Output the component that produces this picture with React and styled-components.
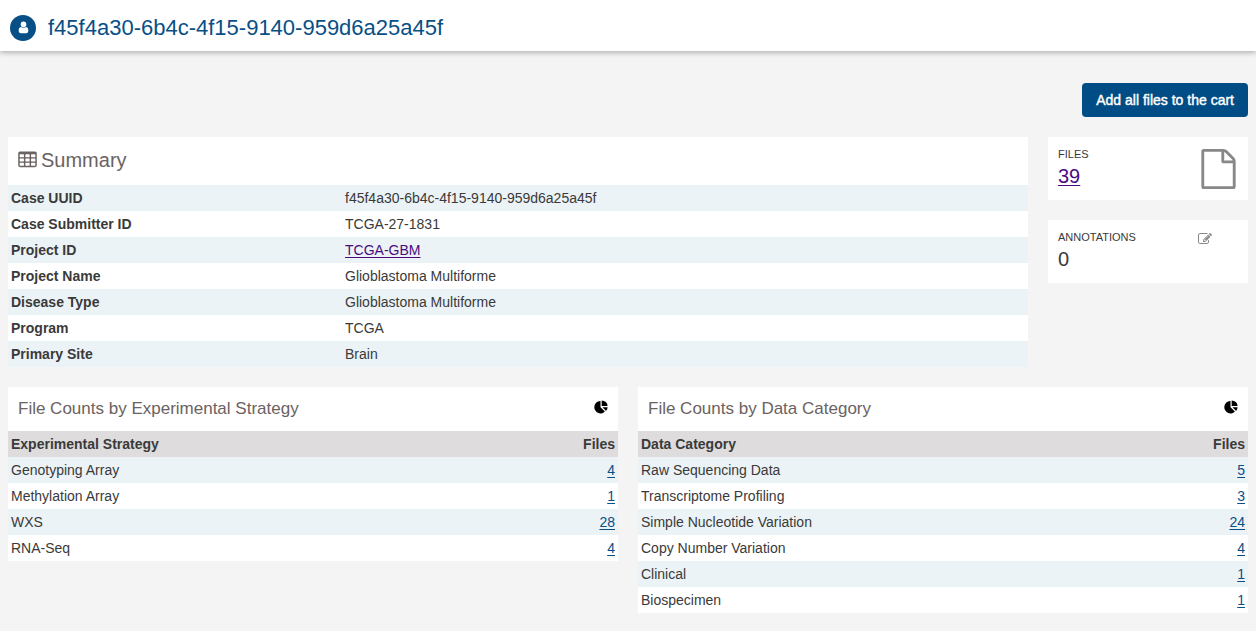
import React from 'react';
import styled, { createGlobalStyle } from 'styled-components';

const GlobalStyle = createGlobalStyle`
  *, *::before, *::after { box-sizing: border-box; }
  body {
    margin: 0;
    background: #f4f4f4;
    color: #3a3a3a;
    font-family: "Liberation Sans", Arial, sans-serif;
    font-size: 14px;
    line-height: 20px;
  }
`;

const Header = styled.header`
  display: flex;
  align-items: center;
  gap: 12px;
  padding: 14px 10px 10px;
  background: #fff;
  box-shadow: 0 2px 5px 0 rgba(0, 0, 0, 0.26);
`;

const Avatar = styled.span`
  display: flex;
  align-items: center;
  justify-content: center;
  flex: none;
  width: 26px;
  height: 26px;
  border-radius: 50%;
  background: #084f86;
`;

const Title = styled.h1`
  margin: 0;
  font-size: 22px;
  line-height: 27px;
  font-weight: 400;
  color: #084f86;
`;

const Main = styled.main`
  display: flex;
  flex-direction: column;
  gap: 20px;
  padding: 32px 8px 18px;
`;

const Actions = styled.div`
  display: flex;
  justify-content: flex-end;
`;

const Button = styled.button`
  height: 34px;
  padding: 0 14px;
  border: 0;
  border-radius: 4px;
  background: #004d85;
  color: #fff;
  font: inherit;
  -webkit-text-stroke: 0.4px #fff;
  cursor: pointer;
`;

const Columns = styled.div`
  display: flex;
  align-items: flex-start;
  gap: 20px;
`;

const Card = styled.section`
  flex: 1;
  min-width: 0;
  background: #fff;
`;

const CardHeader = styled.div`
  display: flex;
  align-items: center;
  justify-content: space-between;
  padding: ${(p) => (p.$large ? '11px 10px 13px' : '10px')};
`;

const CardTitle = styled.h2`
  display: flex;
  align-items: center;
  gap: 4px;
  margin: 0;
  font-size: ${(p) => (p.$large ? 20 : 17)}px;
  line-height: 24px;
  font-weight: 400;
  color: #6b6262;
`;

const ChartButton = styled.button`
  display: flex;
  align-self: flex-start;
  margin: 3px 0 0;
  padding: 0;
  border: 0;
  background: none;
  color: #000;
  cursor: pointer;
`;

const Table = styled.table`
  width: 100%;
  border-collapse: collapse;
  table-layout: fixed;
`;

const Row = styled.tr`
  background: #fff;
  tbody > &:nth-child(odd) { background: #ebf3f6; }
  thead > & { background: #dedcdd; }
`;

const Heading = styled.th`
  width: ${(p) => p.$width || 'auto'};
  padding: 3px;
  text-align: ${(p) => (p.$end ? 'right' : 'left')};
`;

const Cell = styled.td`
  padding: 3px;
  text-align: ${(p) => (p.$end ? 'right' : 'left')};
`;

const Link = styled.a`
  color: ${(p) => (p.$seen ? '#4b0b7f' : '#084f86')};
  text-decoration: underline;
  text-underline-offset: 2px;
  text-decoration-thickness: 1px;
`;

const Aside = styled.aside`
  display: flex;
  flex-direction: column;
  flex: none;
  gap: 20px;
  width: 200px;
`;

const CountCard = styled.section`
  display: flex;
  align-items: flex-start;
  justify-content: space-between;
  padding: 8px 12px 11px 10px;
  background: #fff;
`;

const CountLabel = styled.div`
  font-size: 11px;
  line-height: 18px;
  text-transform: uppercase;
`;

const CountValue = styled.div`
  font-size: 20px;
  line-height: 26px;
`;

const IconSlot = styled.div`
  display: flex;
  width: ${(p) => (p.$wide ? 38 : 35)}px;
  padding-top: 4px;
  color: #888;
`;

const PersonIcon = () => (
  <svg width="11" height="13" viewBox="0 0 10 12" fill="#fff" aria-hidden="true">
    <path d="M5 .5a2.600 2.700 0 0 1 2.600 2.800c0 1-.3 1.700-.8 2.300.8.1 1.500.3 1.900.7.5.5.7 1.500.7 2.800 0 1.500-.7 2.100-1.900 2.100H2.500C1.300 11.200.6 10.600.6 9.100c0-1.300.2-2.300.7-2.800.4-.4 1.100-.6 1.900-.7A3.300 3.300 0 0 1 2.400 3.300 2.600 2.700 0 0 1 5 .5z" />
    <path d="M3 5.500q2 1.400 4 0" fill="none" stroke="#084f86" strokeWidth=".6" />
  </svg>
);

const TableIcon = () => (
  <svg width="19" height="20" viewBox="0 0 1664 1792" fill="currentColor" aria-hidden="true">
    <path
      fillRule="evenodd"
      d="M160 128h1344a160 160 0 0 1 160 160v1088a160 160 0 0 1-160 160H160A160 160 0 0 1 0 1376V288A160 160 0 0 1 160 128z
      M160 384h320q32 0 32 32v192q0 32-32 32H160q-32 0-32-32V416q0-32 32-32z
      M672 384h320q32 0 32 32v192q0 32-32 32H672q-32 0-32-32V416q0-32 32-32z
      M1184 384h320q32 0 32 32v192q0 32-32 32h-320q-32 0-32-32V416q0-32 32-32z
      M160 768h320q32 0 32 32v192q0 32-32 32H160q-32 0-32-32V800q0-32 32-32z
      M672 768h320q32 0 32 32v192q0 32-32 32H672q-32 0-32-32V800q0-32 32-32z
      M1184 768h320q32 0 32 32v192q0 32-32 32h-320q-32 0-32-32V800q0-32 32-32z
      M160 1152h320q32 0 32 32v192q0 32-32 32H160q-32 0-32-32v-192q0-32 32-32z
      M672 1152h320q32 0 32 32v192q0 32-32 32H672q-32 0-32-32v-192q0-32 32-32z
      M1184 1152h320q32 0 32 32v192q0 32-32 32h-320q-32 0-32-32v-192q0-32 32-32z"
    />
  </svg>
);

const FileIcon = () => (
  <svg width="35" height="40" viewBox="0 0 1536 1792" fill="currentColor" aria-hidden="true">
    <path d="M1468 380q28 28 48 76t20 88v1152q0 40-28 68t-68 28H96q-40 0-68-28t-28-68V96q0-40 28-68T96 0h896q40 0 88 20t76 48zM1024 136v376h376q-10-29-22-41l-313-313q-12-12-41-22zm384 1528V640H992q-40 0-68-28t-28-68V128H128v1536h1280z" />
  </svg>
);

const EditIcon = () => (
  <svg width="14" height="14" viewBox="0 0 1792 1792" fill="currentColor" aria-hidden="true">
    <path d="M888 1184l116-116-152-152-116 116v56h96v96h56zm440-720q-16-16-33 1l-350 350q-17 17-1 33t33-1l350-350q17-17 1-33zm80 594v190q0 119-84.5 203.5t-203.5 84.5h-832q-119 0-203.500-84.500t-84.500-203.500v-832q0-119 84.500-203.500t203.500-84.500h832q63 0 117 25 15 7 18 23 3 17-9 29l-49 49q-14 14-32 8-23-6-45-6h-832q-66 0-113 47t-47 113v832q0 66 47 113t113 47h832q66 0 113-47t47-113v-126q0-13 9-22l64-64q15-15 35-7t20 29zm-96-738l288 288-672 672h-288v-288zm444 132l-92 92-288-288 92-92q28-28 68-28t68 28l152 152q28 28 28 68t-28 68z" />
  </svg>
);

const PieIcon = () => (
  <svg width="14" height="14" viewBox="0 0 14 14" fill="currentColor" aria-hidden="true">
    <path d="M6.500 1v6.300l4.400 4.300A6.200 6.200 0 1 1 6.500 1z" />
    <path d="M7.700.4a5.900 5.900 0 0 1 5.900 5.700H7.700z" />
    <path d="M8.500 7.300h5.100a5.600 5.600 0 0 1-1.500 3.600z" />
  </svg>
);

const summary = [
  ['Case UUID', 'f45f4a30-6b4c-4f15-9140-959d6a25a45f'],
  ['Case Submitter ID', 'TCGA-27-1831'],
  ['Project ID', 'TCGA-GBM', true],
  ['Project Name', 'Glioblastoma Multiforme'],
  ['Disease Type', 'Glioblastoma Multiforme'],
  ['Program', 'TCGA'],
  ['Primary Site', 'Brain'],
];

const strategies = [
  ['Genotyping Array', 4],
  ['Methylation Array', 1],
  ['WXS', 28],
  ['RNA-Seq', 4],
];

const categories = [
  ['Raw Sequencing Data', 5],
  ['Transcriptome Profiling', 3],
  ['Simple Nucleotide Variation', 24],
  ['Copy Number Variation', 4],
  ['Clinical', 1],
  ['Biospecimen', 1],
];

function FileCounts({ name, rows }) {
  return (
    <Card>
      <CardHeader>
        <CardTitle>File Counts by {name}</CardTitle>
        <ChartButton type="button" aria-label={`Show ${name} chart`}>
          <PieIcon />
        </ChartButton>
      </CardHeader>
      <Table>
        <thead>
          <Row>
            <Heading scope="col">{name}</Heading>
            <Heading scope="col" $end $width="80px">Files</Heading>
          </Row>
        </thead>
        <tbody>
          {rows.map(([label, count]) => (
            <Row key={label}>
              <Cell>{label}</Cell>
              <Cell $end><Link href="#files">{count}</Link></Cell>
            </Row>
          ))}
        </tbody>
      </Table>
    </Card>
  );
}

export default function App() {
  return (
    <>
      <GlobalStyle />
      <Header>
        <Avatar><PersonIcon /></Avatar>
        <Title>f45f4a30-6b4c-4f15-9140-959d6a25a45f</Title>
      </Header>
      <Main>
        <Actions>
          <Button type="button">Add all files to the cart</Button>
        </Actions>
        <Columns>
          <Card>
            <CardHeader $large>
              <CardTitle $large><TableIcon />Summary</CardTitle>
            </CardHeader>
            <Table>
              <tbody>
                {summary.map(([label, value, linked]) => (
                  <Row key={label}>
                    <Heading scope="row" $width="334px">{label}</Heading>
                    <Cell>{linked ? <Link $seen href="#project">{value}</Link> : value}</Cell>
                  </Row>
                ))}
              </tbody>
            </Table>
          </Card>
          <Aside>
            <CountCard>
              <div>
                <CountLabel>Files</CountLabel>
                <CountValue><Link $seen href="#files">39</Link></CountValue>
              </div>
              <IconSlot><FileIcon /></IconSlot>
            </CountCard>
            <CountCard>
              <div>
                <CountLabel>Annotations</CountLabel>
                <CountValue>0</CountValue>
              </div>
              <IconSlot $wide><EditIcon /></IconSlot>
            </CountCard>
          </Aside>
        </Columns>
        <Columns>
          <FileCounts name="Experimental Strategy" rows={strategies} />
          <FileCounts name="Data Category" rows={categories} />
        </Columns>
      </Main>
    </>
  );
}
